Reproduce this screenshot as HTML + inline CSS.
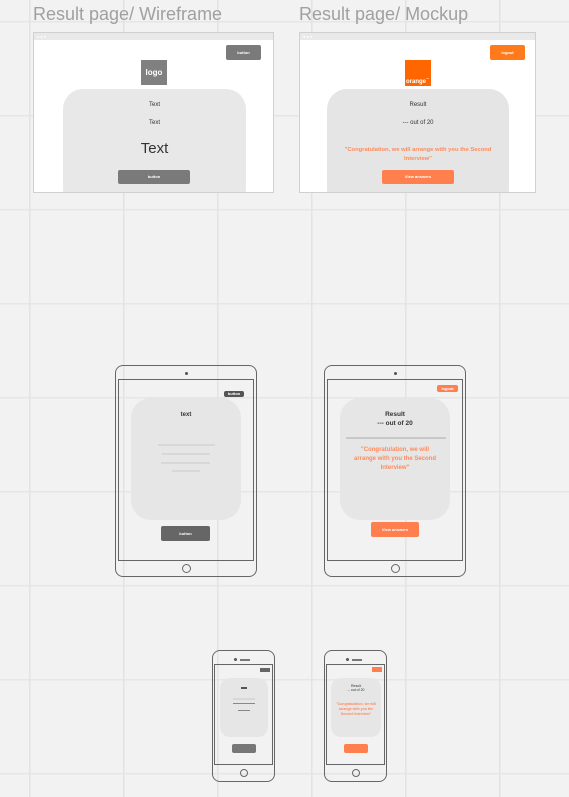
<!DOCTYPE html>
<html><head><meta charset="utf-8"><style>
*{margin:0;padding:0;box-sizing:border-box}
body{width:569px;height:797px;overflow:hidden;position:relative;background:#f2f2f2;font-family:"Liberation Sans",sans-serif;
background-image:linear-gradient(to right,#e3e3e3 0,#e3e3e3 1.5px,transparent 1.5px),linear-gradient(to bottom,#e6e6e6 0,#e6e6e6 1.5px,transparent 1.5px);
background-size:94px 94px;background-position:29px 21px}
.a{position:absolute}
.t{color:#a0a0a0;font-size:18px;top:4px;white-space:nowrap}
.frame{background:#fff;border:1px solid #d0d0d0;overflow:hidden}
.bar{position:absolute;left:0;right:0;top:0;height:7px;background:#e9e9e9}
.dots{position:absolute;left:3px;top:2px;font-size:4px;color:#fff;letter-spacing:1px;line-height:3px}
.card{background:#e8e8e8;border-radius:20px}
.c{text-align:center;position:absolute;left:0;right:0;font-size:6px;color:#333}
.btn{border-radius:2px;color:#fff;font-size:4px;text-align:center;font-weight:bold}
.g{background:#7a7a7a}
.o{background:#ff7f4f}
.dev{border:1.3px solid #666;border-radius:8px}
.scr{border:1.3px solid #666}
.ln{height:1.5px;background:#d8d8d8}
.or{color:#ff8a5c;font-weight:bold}
</style></head><body>
<div class="a t" style="left:33px">Result page/ Wireframe</div>
<div class="a t" style="left:299px">Result page/ Mockup</div>

<div class="a frame" style="left:33px;top:32px;width:241px;height:161px">
<div class="bar"><div class="dots">●●●</div></div>
<div class="a btn g" style="left:192px;top:12px;width:35px;height:15px;line-height:15px">button</div>
<div class="a" style="left:107px;top:27px;width:26px;height:25px;background:#808080;color:#fff;font-size:8px;font-weight:bold;text-align:center;line-height:25px">logo</div>
<div class="a card" style="left:29px;top:56px;width:183px;height:120px">
<div class="c" style="top:13px">Text</div>
<div class="c" style="top:31px">Text</div>
<div class="c" style="top:51px;font-size:15px">Text</div>
<div class="a btn g" style="left:55px;top:81px;width:72px;height:14px;line-height:14px">button</div>
</div></div>

<div class="a frame" style="left:299px;top:32px;width:237px;height:161px">
<div class="bar"><div class="dots">●●●</div></div>
<div class="a btn o" style="left:190px;top:12px;width:35px;height:15px;line-height:15px;background:#ff7a1a">logout</div>
<div class="a" style="left:105px;top:27px;width:26px;height:26px;background:#ff6600;color:#fff;font-size:6px;font-weight:bold;padding-top:17px;padding-left:1px">orange<sup style="font-size:3px">™</sup></div>
<div class="a card" style="left:27px;top:56px;width:182px;height:120px;background:#e5e5e5">
<div class="c" style="top:13px">Result</div>
<div class="c" style="top:31px">--- out of 20</div>
<div class="c or" style="top:57px;font-size:5.8px;line-height:9px">"Congratulation, we will arrange with you the Second<br>Interview"</div>
<div class="a btn o" style="left:55px;top:81px;width:72px;height:14px;line-height:14px">View answers</div>
</div></div>

<!-- tablets -->
<div class="a dev" style="left:115px;top:365px;width:142px;height:212px">
<div class="a" style="left:69px;top:6px;width:3px;height:3px;border-radius:50%;background:#555"></div>
<div class="a scr" style="left:2px;top:13px;width:136px;height:182px"></div>
<div class="a" style="left:66px;top:198px;width:9px;height:9px;border-radius:50%;border:1px solid #666"></div>
</div>
<div class="a btn" style="left:224px;top:391px;width:20px;height:6px;background:#555;line-height:6px;font-size:4px">button</div>
<div class="a card" style="left:131px;top:398px;width:110px;height:122px;background:#e6e6e6">
<div class="c" style="top:14px;font-size:6px;font-weight:bold">text</div>
<div class="a ln" style="left:27px;top:46px;width:57px"></div>
<div class="a ln" style="left:31px;top:55px;width:48px"></div>
<div class="a ln" style="left:30px;top:64px;width:49px"></div>
<div class="a ln" style="left:41px;top:72px;width:28px"></div>
</div>
<div class="a btn" style="left:161px;top:526px;width:49px;height:15px;line-height:15px;background:#666">button</div>

<div class="a dev" style="left:324px;top:365px;width:142px;height:212px">
<div class="a" style="left:69px;top:6px;width:3px;height:3px;border-radius:50%;background:#555"></div>
<div class="a scr" style="left:2px;top:13px;width:136px;height:182px"></div>
<div class="a" style="left:66px;top:198px;width:9px;height:9px;border-radius:50%;border:1px solid #666"></div>
</div>
<div class="a btn o" style="left:437px;top:385px;width:21px;height:7px;line-height:7px">logout</div>
<div class="a card" style="left:340px;top:398px;width:110px;height:122px;background:#e6e6e6">
<div class="c" style="top:13px;font-size:6.5px;font-weight:bold">Result</div>
<div class="c" style="top:22px;font-size:6.5px;font-weight:bold">--- out of 20</div>
<div class="a" style="left:6px;top:39px;width:100px;height:2px;background:#c8c8c8"></div>
<div class="c or" style="top:48px;font-size:6px;line-height:9px">"Congratulation, we will<br>arrange with you the Second<br>Interview"</div>
</div>
<div class="a btn o" style="left:371px;top:522px;width:48px;height:15px;line-height:15px">View answers</div>

<!-- phones -->
<div class="a dev" style="left:212px;top:650px;width:63px;height:132px">
<div class="a" style="left:21px;top:7px;width:3px;height:3px;border-radius:50%;background:#555"></div>
<div class="a" style="left:27px;top:8px;width:10px;height:1.5px;background:#777"></div>
<div class="a scr" style="left:1px;top:13px;width:59px;height:101px"></div>
<div class="a" style="left:27px;top:118px;width:8px;height:8px;border-radius:50%;border:1px solid #666"></div>
</div>
<div class="a" style="left:260px;top:668px;width:10px;height:4px;background:#666"></div>
<div class="a card" style="left:220px;top:678px;width:48px;height:59px;border-radius:10px;background:#e6e6e6">
<div class="a" style="left:21px;top:9px;width:6px;height:1.5px;background:#555"></div>
<div class="a ln" style="left:13px;top:20px;width:22px"></div>
<div class="a" style="left:13px;top:25px;width:22px;height:1px;background:#888"></div>
<div class="a" style="left:18px;top:32px;width:12px;height:1px;background:#888"></div>
</div>
<div class="a" style="left:232px;top:744px;width:24px;height:9px;background:#777;border-radius:2px"></div>

<div class="a dev" style="left:324px;top:650px;width:63px;height:132px">
<div class="a" style="left:21px;top:7px;width:3px;height:3px;border-radius:50%;background:#555"></div>
<div class="a" style="left:27px;top:8px;width:10px;height:1.5px;background:#777"></div>
<div class="a scr" style="left:1px;top:13px;width:59px;height:101px"></div>
<div class="a" style="left:27px;top:118px;width:8px;height:8px;border-radius:50%;border:1px solid #666"></div>
</div>
<div class="a o" style="left:372px;top:667px;width:10px;height:5px"></div>
<div class="a card" style="left:331px;top:678px;width:50px;height:59px;border-radius:10px;background:#e6e6e6">
<div class="c" style="top:6px;font-size:3.5px;line-height:4px">Result<br>-- out of 20</div>
<div class="c or" style="top:24px;font-size:3.5px;line-height:5px">"Congratulation, we will<br>arrange with you the<br>Second Interview"</div>
</div>
<div class="a o" style="left:344px;top:744px;width:24px;height:9px;border-radius:2px"></div>
</body></html>
